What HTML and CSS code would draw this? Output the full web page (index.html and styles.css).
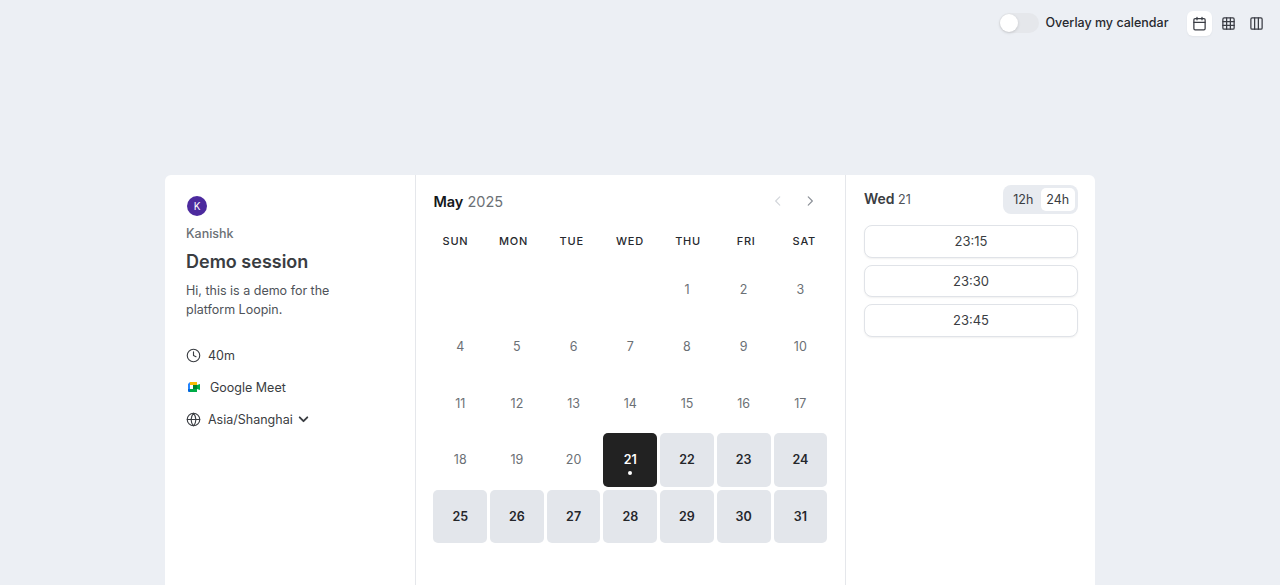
FILE: index.html
```html
<!DOCTYPE html>
<html lang="en">
<head>
  <meta charset="UTF-8">
  <meta name="viewport" content="width=device-width, initial-scale=1.0">
  <title>Demo session</title>
  <link rel="stylesheet" href="styles.css">
</head>
<body>
<div class="topbar">
  <span class="toggle"><span class="toggle-knob"></span></span>
  <span class="overlay-label">Overlay my calendar</span>
  <div class="view-switch">
    <button class="view-btn active" aria-label="Month view">
      <svg class="view-icon" viewBox="0 0 24 24" fill="none" stroke="currentColor" stroke-width="2" stroke-linecap="round" stroke-linejoin="round">
        <path d="M8 2v4M16 2v4"/><rect x="3" y="4" width="18" height="18" rx="2"/><path d="M3 10h18"/>
      </svg>
    </button>
    <button class="view-btn" aria-label="Week view">
      <svg class="view-icon" viewBox="0 0 24 24" fill="none" stroke="currentColor" stroke-width="2" stroke-linecap="round" stroke-linejoin="round">
        <rect x="3" y="3" width="18" height="18" rx="2"/><path d="M3 9h18M3 15h18M9 3v18M15 3v18"/>
      </svg>
    </button>
    <button class="view-btn" aria-label="Column view">
      <svg class="view-icon" viewBox="0 0 24 24" fill="none" stroke="currentColor" stroke-width="2" stroke-linecap="round" stroke-linejoin="round">
        <rect x="3" y="3" width="18" height="18" rx="2"/><path d="M9 3v18M15 3v18"/>
      </svg>
    </button>
  </div>
</div>

<div class="booker">
  <aside class="info">
    <div class="avatar">K</div>
    <div class="host">Kanishk</div>
    <h1>Demo session</h1>
    <p class="description">Hi, this is a demo for the platform Loopin.</p>
    <ul class="meta">
      <li>
        <svg class="meta-icon" viewBox="0 0 24 24" fill="none" stroke="currentColor" stroke-width="2" stroke-linecap="round" stroke-linejoin="round">
          <circle cx="12" cy="12" r="10"/><path d="M12 6v6l4 2"/>
        </svg>
        40m
      </li>
      <li class="meet">
        <svg class="meet-icon" viewBox="0 0 12 10">
          <path fill="#fbbc04" d="M2 0h7v3H2z"/>
          <path fill="#2684fc" d="M0 2l2-2v7H0z"/>
          <path fill="#0066da" d="M0 7h2v3H1a1 1 0 0 1-1-1z"/>
          <path fill="#00ac47" d="M2 7h7v3H2z"/>
          <path fill="#00832d" d="M5 3h4v4H5z"/>
          <path fill="#00ac47" d="M9 3l3-1v6L9 7z"/>
        </svg>
        Google Meet
      </li>
      <li>
        <svg class="meta-icon" viewBox="0 0 24 24" fill="none" stroke="currentColor" stroke-width="2" stroke-linecap="round" stroke-linejoin="round">
          <circle cx="12" cy="12" r="10"/><path d="M2 12h20"/><path d="M12 2a15 15 0 0 1 0 20a15 15 0 0 1 0-20"/>
        </svg>
        Asia/Shanghai
        <svg class="chevron" viewBox="0 0 24 24" fill="none" stroke="currentColor" stroke-width="3.5" stroke-linecap="round" stroke-linejoin="round">
          <path d="M5 8l7 7 7-7"/>
        </svg>
      </li>
    </ul>
  </aside>

  <main class="calendar">
    <div class="cal-header">
      <div class="cal-title"><strong>May</strong> 2025</div>
      <div class="cal-nav">
        <svg class="nav-icon prev" viewBox="0 0 24 24" fill="none" stroke="currentColor" stroke-width="2" stroke-linecap="round" stroke-linejoin="round"><path d="M15 5l-7 7 7 7"/></svg>
        <svg class="nav-icon" viewBox="0 0 24 24" fill="none" stroke="currentColor" stroke-width="2" stroke-linecap="round" stroke-linejoin="round"><path d="M9 5l7 7-7 7"/></svg>
      </div>
    </div>
    <div class="weekdays">
      <span>SUN</span><span>MON</span><span>TUE</span><span>WED</span><span>THU</span><span>FRI</span><span>SAT</span>
    </div>
    <div class="days">
      <span class="day first">1</span><span class="day">2</span><span class="day">3</span>
      <span class="day">4</span><span class="day">5</span><span class="day">6</span><span class="day">7</span><span class="day">8</span><span class="day">9</span><span class="day">10</span>
      <span class="day">11</span><span class="day">12</span><span class="day">13</span><span class="day">14</span><span class="day">15</span><span class="day">16</span><span class="day">17</span>
      <span class="day">18</span><span class="day">19</span><span class="day">20</span>
      <button class="day open selected">21</button>
      <button class="day open">22</button><button class="day open">23</button><button class="day open">24</button>
      <button class="day open">25</button><button class="day open">26</button><button class="day open">27</button><button class="day open">28</button><button class="day open">29</button><button class="day open">30</button><button class="day open">31</button>
    </div>
  </main>

  <section class="slots">
    <div class="slots-header">
      <div class="slots-title"><strong>Wed</strong> 21</div>
      <div class="format-switch">
        <span class="format">12h</span>
        <span class="format active">24h</span>
      </div>
    </div>
    <button class="slot">23:15</button>
    <button class="slot">23:30</button>
    <button class="slot">23:45</button>
  </section>
</div>
</body>
</html>
```

FILE: styles.css
```css
* {
  margin: 0;
  padding: 0;
  box-sizing: border-box;
  font-family: 'Inter', sans-serif;
}

html, body {
  height: 100%;
  overflow: hidden;
}

body {
  background: #eceff4;
  color: #374151;
  display: flex;
  flex-direction: column;
}

button {
  border: none;
  background: none;
  color: inherit;
}

/* top bar */
.topbar {
  height: 175px;
  flex-shrink: 0;
  display: flex;
  align-items: flex-start;
  justify-content: flex-end;
  padding: 11px 11px 0 0;
}

.toggle {
  width: 40px;
  height: 20px;
  margin-top: 2px;
  border-radius: 10px;
  background: #e5e7eb;
  display: flex;
  align-items: center;
  padding-left: 1px;
}

.toggle-knob {
  width: 18px;
  height: 18px;
  border-radius: 50%;
  background: #fff;
  box-shadow: 0 1px 3px rgba(0, 0, 0, 0.15);
}

.overlay-label {
  margin-left: 6px;
  font-size: 12.5px;
  font-weight: 500;
  line-height: 24px;
  color: #27292e;
}

.view-switch {
  display: flex;
  gap: 3.5px;
  margin-left: 18.5px;
}

.view-btn {
  width: 25px;
  height: 25px;
  border-radius: 6px;
  display: flex;
  align-items: center;
  justify-content: center;
  color: #3a3d44;
}

.view-btn.active {
  background: #fff;
  box-shadow: 0 1px 2px rgba(0, 0, 0, 0.05);
}

.view-icon {
  width: 15px;
  height: 15px;
}

/* card */
.booker {
  width: 930px;
  margin-left: 165px;
  flex: 1 0 auto;
  min-height: 420px;
  background: #fff;
  border-radius: 6px 6px 0 0;
  display: flex;
}

.info {
  width: 251px;
  flex-shrink: 0;
  padding: 21px 21px 0;
  border-right: 1px solid #e5e7eb;
}

.avatar {
  width: 20px;
  height: 20px;
  margin-left: 1px;
  border-radius: 50%;
  background: #4c2a9e;
  color: #fff;
  font-size: 10px;
  line-height: 20px;
  text-align: center;
}

.host {
  margin-top: 8px;
  font-size: 12.5px;
  font-weight: 500;
  line-height: 20px;
  color: #6b7075;
}

h1 {
  margin-top: 4px;
  font-size: 18px;
  font-weight: 600;
  line-height: 28px;
  color: #3a3d42;
}

.description {
  margin-top: 5px;
  width: 170px;
  font-size: 12.5px;
  line-height: 19px;
  color: #4f5359;
}

.meta {
  list-style: none;
  margin-top: 20px;
}

.meta li {
  display: flex;
  align-items: center;
  height: 32px;
  font-size: 12.5px;
  color: #3a3d42;
}

.meta-icon {
  width: 15px;
  height: 15px;
  margin-right: 7px;
  stroke-width: 1.8;
}

.meet-icon {
  width: 12px;
  height: 10px;
  margin-left: 2px;
  margin-right: 10px;
}

.chevron {
  width: 13px;
  height: 13px;
  margin-left: 4px;
}

/* calendar */
.calendar {
  width: 430px;
  flex-shrink: 0;
  padding: 15px 18.6px 0 17.4px;
  border-right: 1px solid #e5e7eb;
}

.cal-header {
  display: flex;
  align-items: center;
  justify-content: space-between;
  height: 22px;
}

.cal-title {
  font-size: 14.5px;
  color: #6b7075;
}

.cal-title strong {
  font-weight: 600;
  color: #15171a;
}

.cal-nav {
  display: flex;
  gap: 18px;
  padding-right: 9px;
  color: #8a8f96;
}

.nav-icon {
  width: 14px;
  height: 14px;
}

.nav-icon.prev {
  color: #d3d6db;
}

.weekdays {
  display: grid;
  grid-template-columns: repeat(7, 1fr);
  margin: 20px -7px 0 -7px;
  font-size: 11px;
  font-weight: 500;
  letter-spacing: 0.07em;
  line-height: 19px;
  text-align: center;
  color: #27292e;
}

.days {
  display: grid;
  grid-template-columns: repeat(7, 53.7px);
  grid-auto-rows: 53.7px;
  gap: 3px;
  margin-top: 12px;
}

.day {
  display: flex;
  align-items: center;
  justify-content: center;
  font-size: 12.5px;
  color: #6b7075;
}

.day.first {
  grid-column-start: 5;
}

.day.open {
  background: #e3e6eb;
  border-radius: 5px;
  font-weight: 600;
  color: #25272b;
}

.day.selected {
  position: relative;
  background: #222;
  color: #fff;
}

.day.selected::after {
  content: "";
  position: absolute;
  left: 50%;
  bottom: 12px;
  width: 4px;
  height: 4px;
  margin-left: -2px;
  border-radius: 50%;
  background: #fff;
}

/* time slots */
.slots {
  flex: 1;
  padding: 9px 17px 0 18px;
}

.slots-header {
  display: flex;
  align-items: center;
  justify-content: space-between;
  height: 30px;
  margin-bottom: 11px;
}

.slots-title {
  padding-bottom: 2px;
  font-size: 12.5px;
  color: #4f5359;
}

.slots-title strong {
  font-size: 14px;
  font-weight: 600;
  color: #3a3d42;
}

.format-switch {
  display: flex;
  padding: 3px;
  border-radius: 8px;
  background: #e8ebf0;
  font-size: 12.5px;
}

.format {
  width: 34.5px;
  height: 23px;
  line-height: 23px;
  text-align: center;
  border-radius: 5px;
  color: #3a3d42;
}

.format.active {
  background: #fff;
}

.slot {
  display: block;
  width: 100%;
  height: 32.5px;
  margin-bottom: 7px;
  border: 1px solid #e0e3e8;
  border-radius: 8px;
  background: #fff;
  box-shadow: 0 1px 2px rgba(0, 0, 0, 0.06);
  font-size: 13px;
  color: #3a3d42;
}
```
